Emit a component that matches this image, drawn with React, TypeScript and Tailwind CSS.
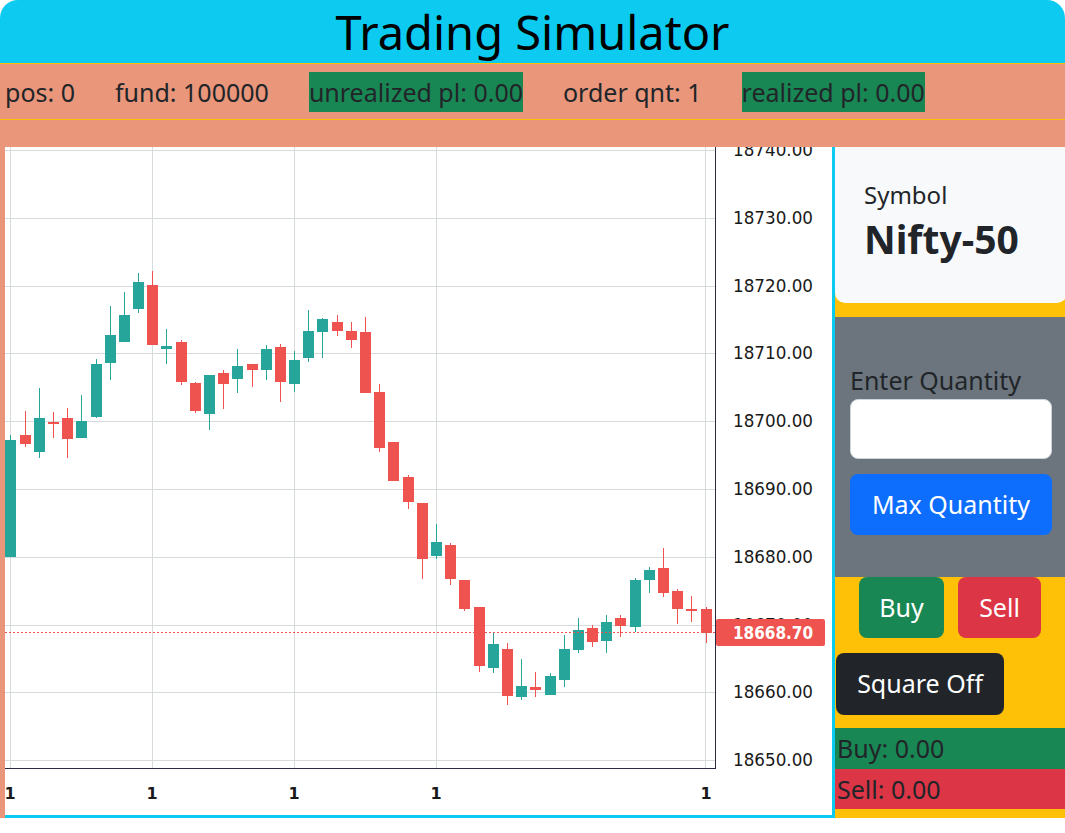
import React from 'react';

type Candle = [number, number, number, number, number, 'g' | 'r'];

// x, body top, body bottom, high, low, colour (page pixel coords)
const candles: Candle[] = [
  [10, 440, 557, 435, 557, 'g'],
  [25, 435, 444, 411, 447, 'r'],
  [39, 418, 452, 388, 458, 'g'],
  [53, 422, 424, 412, 438, 'r'],
  [67, 418, 439, 408, 458, 'r'],
  [81, 421, 438, 395, 438, 'g'],
  [96, 364, 417, 359, 418, 'g'],
  [110, 335, 363, 306, 380, 'g'],
  [124, 315, 342, 292, 342, 'g'],
  [138, 282, 309, 273, 313, 'g'],
  [152, 285, 345, 271, 345, 'r'],
  [166, 346, 349, 329, 364, 'g'],
  [181, 342, 382, 340, 385, 'r'],
  [195, 383, 411, 382, 413, 'r'],
  [209, 375, 414, 375, 430, 'g'],
  [223, 373, 384, 370, 409, 'r'],
  [237, 366, 379, 349, 393, 'g'],
  [252, 364, 370, 364, 387, 'r'],
  [266, 349, 370, 345, 380, 'g'],
  [280, 347, 382, 344, 402, 'r'],
  [294, 360, 384, 351, 392, 'g'],
  [308, 331, 358, 310, 362, 'g'],
  [322, 319, 332, 318, 358, 'g'],
  [337, 322, 331, 315, 336, 'r'],
  [351, 331, 340, 322, 348, 'r'],
  [365, 332, 393, 317, 393, 'r'],
  [379, 392, 448, 384, 452, 'r'],
  [393, 442, 481, 442, 481, 'r'],
  [408, 477, 502, 475, 509, 'r'],
  [422, 503, 559, 503, 579, 'r'],
  [436, 542, 556, 524, 559, 'g'],
  [450, 545, 579, 543, 585, 'r'],
  [464, 580, 609, 580, 611, 'r'],
  [479, 607, 666, 607, 672, 'r'],
  [493, 644, 668, 633, 673, 'g'],
  [507, 649, 696, 643, 705, 'r'],
  [521, 686, 697, 659, 700, 'g'],
  [535, 687, 690, 672, 697, 'r'],
  [550, 676, 695, 673, 695, 'g'],
  [564, 649, 680, 635, 687, 'g'],
  [578, 630, 650, 618, 653, 'g'],
  [592, 628, 642, 625, 647, 'r'],
  [606, 622, 641, 615, 653, 'g'],
  [620, 618, 626, 615, 637, 'r'],
  [635, 580, 627, 578, 632, 'g'],
  [649, 570, 580, 567, 593, 'g'],
  [663, 568, 593, 548, 597, 'r'],
  [677, 591, 609, 589, 624, 'r'],
  [691, 609, 611, 596, 622, 'r'],
  [706, 609, 633, 607, 643, 'r'],
];

const priceLevels = [18740, 18730, 18720, 18710, 18700, 18690, 18680, 18670, 18660, 18650];
const priceY = (p: number) => 150 + (18740 - p) * 6.78;
const timeTicks = [10, 152, 294, 436, 706];
const vGrid = [10, 152, 294, 436, 705];

const CandleChart: React.FC = () => {
  const font = "'DejaVu Sans', 'Liberation Sans', sans-serif";
  return (
    <svg width={827} height={668} viewBox="5 147 827 668" className="block">
      <rect x={5} y={147} width={827} height={668} fill="#ffffff" />
      {priceLevels.map((p) => (
        <line key={p} x1={5} x2={715} y1={Math.round(priceY(p)) + 0.5} y2={Math.round(priceY(p)) + 0.5} stroke="#D6DCDE" strokeWidth={1} />
      ))}
      {vGrid.map((x) => (
        <line key={x} x1={x + 0.5} x2={x + 0.5} y1={147} y2={768} stroke="#D6DCDE" strokeWidth={1} />
      ))}
      {candles.map(([x, top, bottom, high, low, c], i) => {
        const color = c === 'g' ? '#26a69a' : '#ef5350';
        return (
          <g key={i}>
            <rect x={x} y={high} width={1} height={low - high} fill={color} />
            <rect x={x - 5} y={top} width={11} height={Math.max(bottom - top, 2)} fill={color} />
          </g>
        );
      })}
      <line x1={5} x2={715} y1={632.5} y2={632.5} stroke="#ef5350" strokeWidth={1} strokeDasharray="2 2" />
      <line x1={715.5} x2={715.5} y1={147} y2={769} stroke="#2B2B43" strokeWidth={1} />
      <line x1={5} x2={716} y1={768.5} y2={768.5} stroke="#2B2B43" strokeWidth={1} />
      {priceLevels.map((p) => (
        <text key={p} x={733} y={priceY(p) + 6} fontSize={17} fill="#191919" fontFamily={font} textLength={80} lengthAdjust="spacingAndGlyphs">
          {p.toFixed(2)}
        </text>
      ))}
      <rect x={716} y={619} width={109} height={27} rx={2} fill="#ef5350" />
      <text x={733} y={639} fontSize={17} fontWeight="bold" fill="#ffffff" fontFamily={font} textLength={80} lengthAdjust="spacingAndGlyphs">
        18668.70
      </text>
      {timeTicks.map((x) => (
        <text key={x} x={x} y={799} fontSize={16} fontWeight="bold" fill="#191919" fontFamily={font} textAnchor="middle">
          1
        </text>
      ))}
    </svg>
  );
};

export default function App() {
  return (
    <div className="w-[1065px] h-[833px] bg-white font-['Noto_Sans',sans-serif] text-[#212529]">
      <header className="h-[63px] bg-[#0dcaf0] rounded-t-[18px] flex items-center justify-center">
        <h1 className="text-[47px] leading-none text-black pt-[2px]">Trading Simulator</h1>
      </header>

      <div className="h-[84px] bg-[#e9967a] border-t border-[#ffc107]">
        <div className="h-[56px] border-b border-[#ffc107] flex items-center gap-[40px] pl-[5px] text-[25px] leading-[40px]">
          <span>pos: 0</span>
          <span>fund: 100000</span>
          <span className="bg-[#198754]">unrealized pl: 0.00</span>
          <span>order qnt: 1</span>
          <span className="bg-[#198754]">realized pl: 0.00</span>
        </div>
      </div>

      <div className="flex h-[671px]">
        <div className="w-[835px] pl-[5px] bg-[#e9967a] flex">
          <div className="border-r-[3px] border-b-[3px] border-[#0dcaf0] bg-white overflow-hidden">
            <CandleChart />
          </div>
        </div>

        <aside className="flex-1 bg-[#ffc107] flex flex-col">
          <div className="h-[156px] bg-[#f8f9fa] rounded-b-[10px] pl-[29px] pt-[30px]">
            <div className="text-[24px] leading-[36px]">Symbol</div>
            <div className="text-[39px] font-bold leading-[52px]">Nifty-50</div>
          </div>

          <div className="mt-[14px] h-[260px] bg-[#6c757d] px-[15px] pt-[45px]">
            <label className="block text-[25px] leading-[36px] text-[#212529]">Enter Quantity</label>
            <input type="text" className="block mt-[1px] w-[202px] h-[60px] bg-white rounded-[8px] border border-[#ced4da] outline-none" />
            <button className="block mt-[15px] w-[202px] h-[61px] bg-[#0d6efd] rounded-[8px] text-white text-[25px]">Max Quantity</button>
          </div>

          <div className="flex gap-[14px] pl-[24px]">
            <button className="w-[85px] h-[61px] bg-[#198754] rounded-[8px] text-white text-[25px]">Buy</button>
            <button className="w-[83px] h-[61px] bg-[#dc3545] rounded-[8px] text-white text-[25px]">Sell</button>
          </div>

          <div className="mt-[15px] pl-[1px]">
            <button className="w-[168px] h-[62px] bg-[#212529] rounded-[8px] text-white text-[25px]">Square Off</button>
          </div>

          <div className="mt-[13px] h-[41px] bg-[#198754] pl-[2px] text-[25px] leading-[41px]">Buy: 0.00</div>
          <div className="h-[40px] bg-[#dc3545] pl-[2px] text-[25px] leading-[40px]">Sell: 0.00</div>
        </aside>
      </div>
    </div>
  );
}
